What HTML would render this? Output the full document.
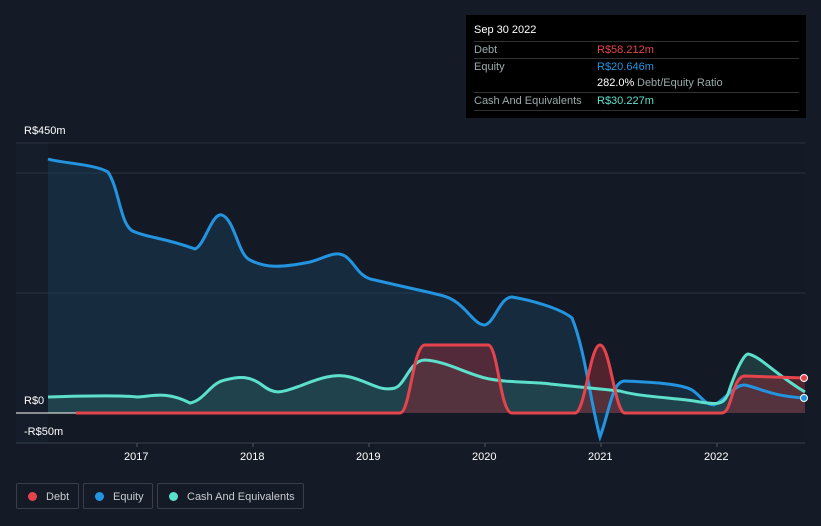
<!DOCTYPE html><html><head><style>
body{margin:0;background:#151b26;font-family:"Liberation Sans",sans-serif;width:821px;height:526px;overflow:hidden;position:relative}
.t{position:absolute;color:#fff;font-size:11px}
.tip{position:absolute;left:466px;top:15px;width:340px;height:103px;background:#000;}
.row{position:absolute;left:8px;width:325px;border-top:1px solid #333;font-size:11px;color:#9aa;height:17px;line-height:17px}
.lg{position:absolute;top:483px;height:26px;border:1px solid #3a3f4a;border-radius:2px;color:#c7cad0;font-size:11px;line-height:26px;box-sizing:border-box}
.lg i{display:inline-block;width:9px;height:9px;border-radius:50%;margin:0 9px 0 11px;vertical-align:-1px}
</style></head><body>
<svg width="821" height="526" style="position:absolute;left:0;top:0">
<rect x="16" y="143" width="789" height="300" fill="#161d2a"/>
<rect x="48" y="143" width="757" height="300" fill="#141a25"/>
<g stroke="#2a3140" stroke-width="1"><line x1="16" y1="173" x2="805" y2="173"/><line x1="16" y1="293" x2="805" y2="293"/><line x1="16" y1="143" x2="805" y2="143"/></g>
<line x1="16" y1="443" x2="805" y2="443" stroke="#3a404c"/>
<line x1="137" y1="443" x2="137" y2="447" stroke="#555"/><line x1="253" y1="443" x2="253" y2="447" stroke="#555"/><line x1="369" y1="443" x2="369" y2="447" stroke="#555"/><line x1="485" y1="443" x2="485" y2="447" stroke="#555"/><line x1="601" y1="443" x2="601" y2="447" stroke="#555"/><line x1="717" y1="443" x2="717" y2="447" stroke="#555"/>
<path d="M48,159 C60,163 95,164 108,172 C120,190 120,228 135,232 C150,238 165,238 195,249 C205,245 212,212 222,215 C235,220 238,255 250,260 C265,268 280,268 310,262 C325,258 335,250 345,256 C355,262 358,278 375,280 C395,285 420,290 440,295 C465,300 472,325 485,325 C495,322 500,297 512,297 C530,300 560,308 572,318 C585,350 590,400 600,437 C610,410 612,381 625,381 C645,382 680,383 692,390 C700,395 705,405 714,405 C725,400 735,384 745,385 C760,388 770,396 805,398 L805,413 L48,413 Z" fill="#1a3a55" fill-opacity="0.55"/>
<path d="M48,397 C80,396 120,395 137,397 C150,397 165,390 190,403 C205,400 210,383 225,380 C240,376 250,376 262,385 C275,395 280,393 300,386 C320,378 335,373 350,377 C370,382 380,392 395,388 C405,385 410,360 425,360 C445,361 465,373 485,378 C505,383 540,382 550,384 C570,386 600,389 620,391 C640,397 680,398 700,402 C720,405 725,405 730,388 C738,365 745,354 748,354 C760,356 775,374 805,392 L805,413 L48,413 Z" fill="#2a5a5a" fill-opacity="0.5"/>
<path d="M400,413 C410,413 413,345 425,345 L488,345 C498,345 500,413 512,413 L575,413 C585,413 590,345 600,345 C610,345 615,413 625,413 L722,413 C732,413 732,376 745,376 L805,378 L805,413 Z" fill="#7a2a35" fill-opacity="0.6"/>
<path d="M48,159 C60,163 95,164 108,172 C120,190 120,228 135,232 C150,238 165,238 195,249 C205,245 212,212 222,215 C235,220 238,255 250,260 C265,268 280,268 310,262 C325,258 335,250 345,256 C355,262 358,278 375,280 C395,285 420,290 440,295 C465,300 472,325 485,325 C495,322 500,297 512,297 C530,300 560,308 572,318 C585,350 590,400 600,437 C610,410 612,381 625,381 C645,382 680,383 692,390 C700,395 705,405 714,405 C725,400 735,384 745,385 C760,388 770,396 805,398" fill="none" stroke="#2394df" stroke-width="3"/>
<path d="M48,397 C80,396 120,395 137,397 C150,397 165,390 190,403 C205,400 210,383 225,380 C240,376 250,376 262,385 C275,395 280,393 300,386 C320,378 335,373 350,377 C370,382 380,392 395,388 C405,385 410,360 425,360 C445,361 465,373 485,378 C505,383 540,382 550,384 C570,386 600,389 620,391 C640,397 680,398 700,402 C720,405 725,405 730,388 C738,365 745,354 748,354 C760,356 775,374 805,392" fill="none" stroke="#5de0cb" stroke-width="3"/>
<line x1="16" y1="413" x2="76" y2="413" stroke="#fff" stroke-width="1"/>
<path d="M76,413 L400,413 C410,413 413,345 425,345 L488,345 C498,345 500,413 512,413 L575,413 C585,413 590,345 600,345 C610,345 615,413 625,413 L722,413 C732,413 732,376 745,376 L805,378" fill="none" stroke="#e5444d" stroke-width="3"/>
<circle cx="804" cy="378" r="3.5" fill="#e5444d" stroke="#fff"/><circle cx="804" cy="398" r="3.5" fill="#2394df" stroke="#fff"/>
</svg>
<div class="t" style="left:24px;top:125px">R$450m</div>
<div class="t" style="left:24px;top:395px">R$0</div>
<div class="t" style="left:24px;top:426px">-R$50m</div>
<div class="t" style="left:124px;top:451px">2017</div><div class="t" style="left:240px;top:451px">2018</div><div class="t" style="left:356px;top:451px">2019</div><div class="t" style="left:472px;top:451px">2020</div><div class="t" style="left:588px;top:451px">2021</div><div class="t" style="left:704px;top:451px">2022</div>
<div class="tip">
<div style="position:absolute;left:8px;top:9px;color:#fff;font-size:11px">Sep 30 2022</div>
<div class="row" style="top:26px">Debt<span style="position:absolute;left:123px;color:#e5444d">R$58.212m</span></div>
<div class="row" style="top:43px">Equity<span style="position:absolute;left:123px;color:#2394df">R$20.646m</span></div>
<div class="row" style="top:60px;border:0"><span style="position:absolute;left:123px;color:#fff">282.0%</span><span style="position:absolute;left:163px">Debt/Equity Ratio</span></div>
<div class="row" style="top:77px">Cash And Equivalents<span style="position:absolute;left:123px;color:#5de0cb">R$30.227m</span></div>
<div class="row" style="top:95px;height:0"></div>
</div>
<div class="lg" style="left:16px;width:63px"><i style="background:#e5444d"></i>Debt</div>
<div class="lg" style="left:83px;width:70px"><i style="background:#2394df"></i>Equity</div>
<div class="lg" style="left:157px;width:147px"><i style="background:#5de0cb"></i>Cash And Equivalents</div>
</body></html>
